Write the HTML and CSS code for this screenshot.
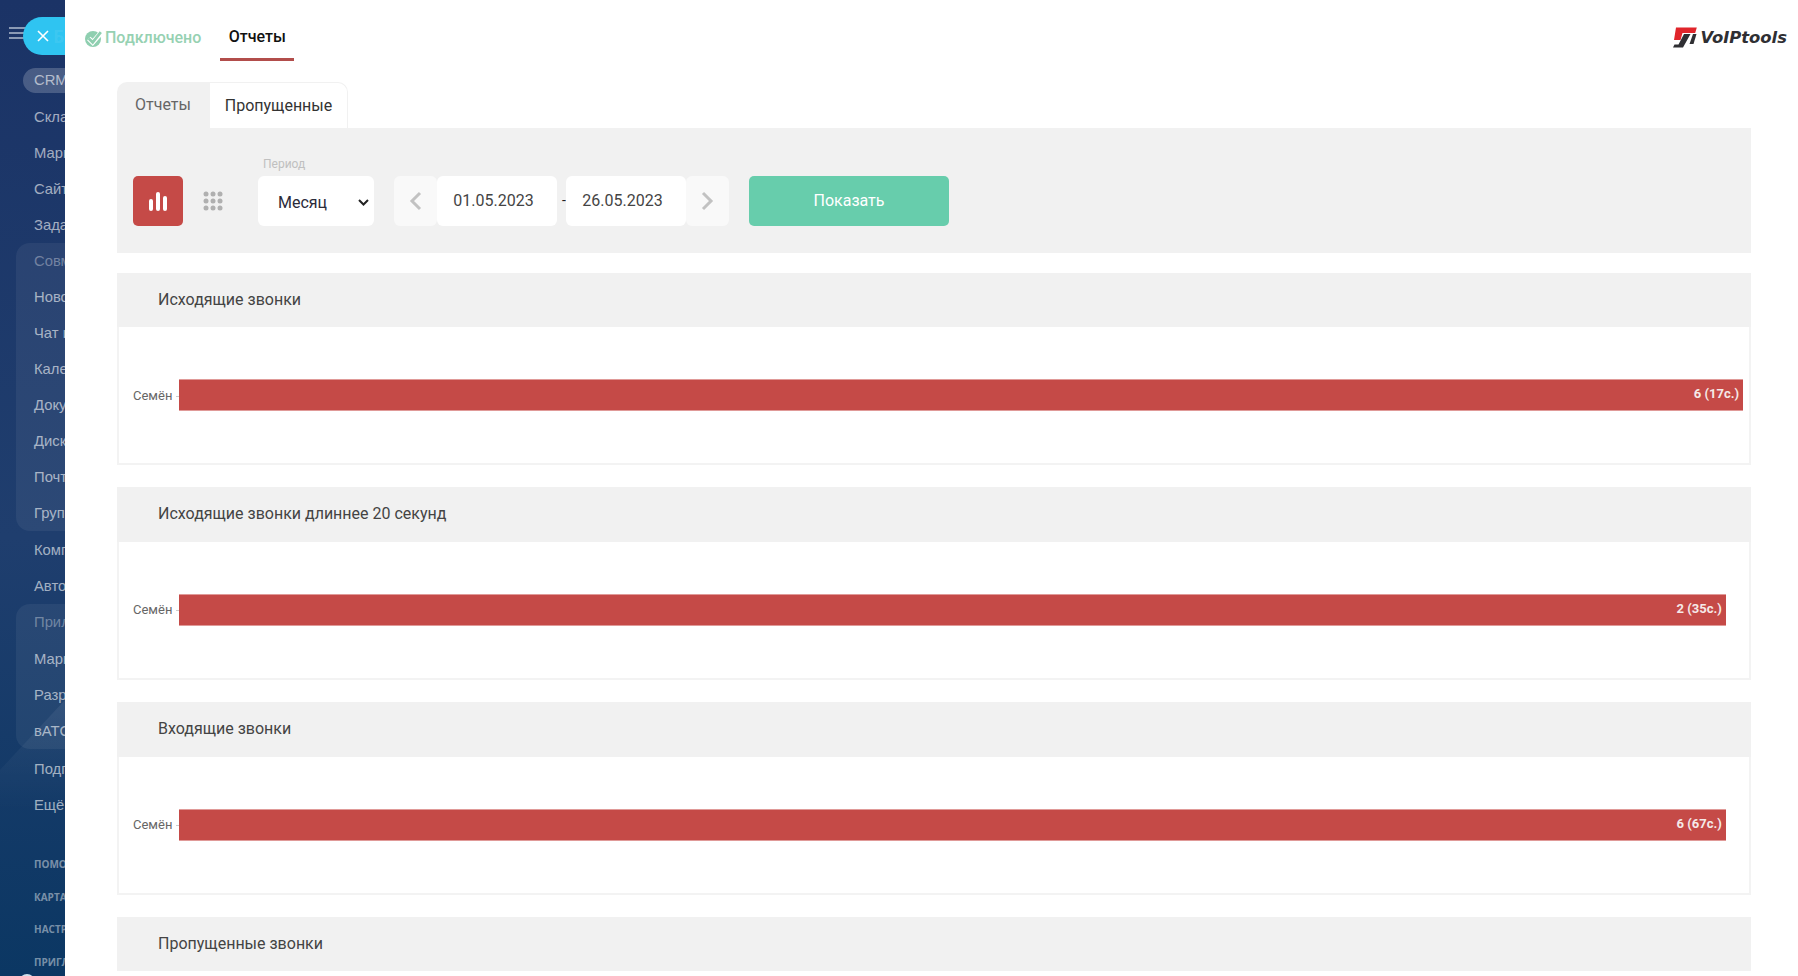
FILE: index.html
```html
<!DOCTYPE html>
<html lang="ru">
<head>
<meta charset="utf-8">
<title>Отчеты</title>
<link rel="stylesheet" href="styles.css">
</head>
<body>
<div class="app">
  <aside class="sidebar">
    <div class="burger"><i></i><i></i><i></i></div>
    <nav class="menu">
      <a class="item pill">CRM</a>
      <a class="item">Склад</a>
      <a class="item">Маркетинг</a>
      <a class="item">Сайты</a>
      <a class="item">Задачи</a>
      <div class="group group-a">
        <a class="item dim">Совместная</a>
        <a class="item">Новости</a>
        <a class="item">Чат и звонки</a>
        <a class="item">Календарь</a>
        <a class="item">Документы</a>
        <a class="item">Диск</a>
        <a class="item">Почта</a>
        <a class="item">Группы</a>
      </div>
      <a class="item">Компания</a>
      <a class="item">Автоматизация</a>
      <div class="group group-b">
        <a class="item dim">Приложения</a>
        <a class="item">Маркет</a>
        <a class="item">Разработчикам</a>
        <a class="item">вАТС</a>
      </div>
      <a class="item">Подписка</a>
      <a class="item">Ещё</a>
      <div class="small-links">
        <a>ПОМОЩЬ</a>
        <a>КАРТА САЙТА</a>
        <a>НАСТРОИТЬ МЕНЮ</a>
        <a>ПРИГЛАСИТЬ</a>
      </div>
    </nav>
    <span class="avatar"></span>
  </aside>

  <button class="close" aria-label="Закрыть">
    <svg class="close-icon" width="14" height="14" viewBox="0 0 14 14"><path d="M2 2l10 10M12 2L2 12" stroke="#fff" stroke-width="1.6" fill="none"/></svg>
    <span class="close-text">Бит</span>
  </button>

  <main class="main">
    <header class="topbar">
      <div class="status">
        <svg class="status-icon" width="18" height="18" viewBox="0 0 18 18">
          <circle cx="8" cy="10" r="8" fill="#8fcfb0"/>
          <path d="M3.800 9.500L7.700 13.300L15.800 4.200" stroke="#fff" stroke-width="5" fill="none"/>
          <path d="M3.800 9.500L7.700 13.300L15.800 3.200" stroke="#8fcfb0" stroke-width="2.800" fill="none"/>
        </svg>
        <span>Подключено</span>
      </div>
      <a class="top-tab">Отчеты</a>
      <div class="logo">
        <svg width="24" height="21" viewBox="0 0 24 21">
          <path d="M3 0.500H23.800L22.200 6H9.500L7.500 13H1z" fill="#e0252b"/>
          <path d="M11 7H17.500L10 20.500H0L1.500 17.500H5.500z" fill="#2f2f33"/>
          <path d="M20 7H23.500L20.500 17H16.500z" fill="#2f2f33"/>
        </svg>
        <span class="logo-text">VoIPtools</span>
      </div>
    </header>

    <section class="content">
      <div class="tabs">
        <a class="tab">Отчеты</a>
        <a class="tab active">Пропущенные</a>
      </div>

      <div class="filters">
        <button class="view-btn">
          <svg width="18" height="19" viewBox="0 0 18 19" fill="#fff"><rect x="0" y="7" width="4" height="12" rx="2"/><rect x="7" y="0" width="4" height="19" rx="2"/><rect x="14" y="4" width="4" height="15" rx="2"/></svg>
        </button>
        <span class="grid-btn">
          <svg width="20" height="20" viewBox="0 0 20 20" fill="#b0b0b0"><circle cx="3" cy="3" r="2.500"/><circle cx="10" cy="3" r="2.500"/><circle cx="17" cy="3" r="2.500"/><circle cx="3" cy="10" r="2.500"/><circle cx="10" cy="10" r="2.500"/><circle cx="17" cy="10" r="2.500"/><circle cx="3" cy="17" r="2.500"/><circle cx="10" cy="17" r="2.500"/><circle cx="17" cy="17" r="2.500"/></svg>
        </span>
        <label class="period">
          <span class="period-label">Период</span>
          <span class="select">Месяц
            <svg class="chev" width="11" height="7" viewBox="0 0 11 7"><path d="M1 1l4.500 4.500L10 1" stroke="#222" stroke-width="2" fill="none"/></svg>
          </span>
        </label>
        <div class="dates">
          <span class="arrow">
            <svg width="13" height="20" viewBox="0 0 13 20"><path d="M11 2L3 10l8 8" stroke="#c2c2c2" stroke-width="3" fill="none"/></svg>
          </span>
          <span class="date">01.05.2023</span>
          <span class="dash">-</span>
          <span class="date">26.05.2023</span>
          <span class="arrow">
            <svg width="13" height="20" viewBox="0 0 13 20"><path d="M2 2l8 8-8 8" stroke="#c2c2c2" stroke-width="3" fill="none"/></svg>
          </span>
        </div>
        <button class="show">Показать</button>
      </div>

      <article class="card">
        <h3 class="card-title">Исходящие звонки</h3>
        <div class="card-body">
          <span class="bar-label">Семён</span>
          <div class="track"><div class="bar" style="width:100%">6 (17с.)</div></div>
        </div>
      </article>
      <article class="card">
        <h3 class="card-title">Исходящие звонки длиннее 20 секунд</h3>
        <div class="card-body">
          <span class="bar-label">Семён</span>
          <div class="track"><div class="bar" style="width:98.900%">2 (35с.)</div></div>
        </div>
      </article>
      <article class="card">
        <h3 class="card-title">Входящие звонки</h3>
        <div class="card-body">
          <span class="bar-label">Семён</span>
          <div class="track"><div class="bar" style="width:98.900%">6 (67с.)</div></div>
        </div>
      </article>
      <article class="card">
        <h3 class="card-title">Пропущенные звонки</h3>
      </article>
    </section>
  </main>
</div>
</body>
</html>
```
FILE: styles.css
```css
* { box-sizing: border-box; }
html, body { margin: 0; height: 100%; overflow: hidden; background: #fff; }
body { font-family: Roboto, "Noto Sans", sans-serif; color: #333; }

.app { display: flex; height: 976px; position: relative; overflow: hidden; }

/* Sidebar */
.sidebar {
  width: 65px;
  flex: none;
  position: relative;
  overflow: hidden;
  white-space: nowrap;
  background: linear-gradient(180deg, #1b3366 0%, #1f3e6e 55%, #0b3763 100%);
}
.sidebar::before {
  content: "";
  position: absolute;
  left: 0;
  top: 700px;
  width: 65px;
  height: 276px;
  background: linear-gradient(180deg, rgba(255,255,255,.07), rgba(255,255,255,0) 40%);
  clip-path: polygon(0 70px, 65px 0, 65px 100%, 0 100%);
}
.burger { position: absolute; left: 9px; top: 27px; width: 17px; display: flex; flex-direction: column; gap: 3px; }
.burger i { height: 2px; background: #8b9ab5; display: block; }
.menu {
  position: relative;
  display: flex;
  flex-direction: column;
  padding: 62px 0 0 16px;
  font-family: "Liberation Sans", sans-serif;
  font-size: 14.8px;
}
.item { display: block; height: 36px; line-height: 36px; padding-left: 18px; color: rgba(255,255,255,.6); }
.pill {
  height: 25px;
  line-height: 25px;
  margin: 6px 0 5.500px 7px;
  padding-left: 11px;
  border-radius: 13px 0 0 13px;
  background: rgba(255,255,255,.2);
}
.group { background: rgba(255,255,255,.06); border-radius: 14px 0 0 14px; }
.group-a { margin: .5px 0 1px; }
.group-b { margin: 0 0 2px; }
.group-b .dim { height: 36.500px; }
.dim { color: rgba(255,255,255,.35); }
.small-links {
  display: flex;
  flex-direction: column;
  margin-top: 25.500px;
  padding-left: 18px;
  font-family: "Open Sans", sans-serif;
  font-size: 10px;
  font-weight: 700;
  color: rgba(255,255,255,.45);
}
.small-links a { height: 32.500px; line-height: 32.500px; }
.avatar { position: absolute; left: 19px; top: 974px; width: 16px; height: 16px; border-radius: 50%; background: #cfe0ec; }

.close {
  position: absolute;
  left: 23px;
  top: 17px;
  width: 42px;
  height: 38px;
  padding: 0 0 0 13px;
  border: 0;
  border-radius: 19px 0 0 19px;
  background: #2fc4f1;
  display: flex;
  align-items: center;
  overflow: hidden;
  white-space: nowrap;
  z-index: 2;
}
.close-icon { flex: none; }
.close-text { flex: none; margin-left: 3px; font-size: 18px; color: rgba(255,255,255,.07); font-family: "Open Sans", sans-serif; font-weight: 700; }

/* Main */
.main { flex: 1; min-width: 0; background: #fff; border-radius: 10px 0 0 0; }
.topbar { height: 82px; display: flex; align-items: flex-start; position: relative; padding-left: 20px; }
.status {
  display: flex;
  align-items: center;
  gap: 2px;
  margin-top: 27px;
  height: 20px;
  font-size: 16px;
  font-weight: 500;
  color: #96d1b2;
}
.status-icon { margin-top: 2px; flex: none; }
.top-tab {
  margin: 0 0 0 19px;
  height: 61px;
  padding: 27px 0 0;
  width: 74px;
  text-align: center;
  font-size: 16px;
  font-weight: 500;
  color: #111;
  line-height: 20px;
  border-bottom: 3px solid #b24d4b;
  white-space: nowrap;
}
.logo { margin-left: auto; margin-right: 11px; margin-top: 27px; display: flex; align-items: center; gap: 3px; }
.logo-text { font-family: "DejaVu Sans", sans-serif; font-size: 16.400px; font-weight: 700; font-style: italic; color: #2f2f33; }

.content { padding: 0 47px 0 52px; }
.tabs { display: flex; height: 46px; }
.tab {
  height: 46px;
  line-height: 46px;
  font-size: 16px;
  text-align: center;
  color: #666;
  background: #f1f1f1;
  width: 92px;
  border-radius: 10px 0 0 0;
}
.tab.active {
  width: 139px;
  color: #333;
  background: #fff;
  border: 1px solid #f1f1f1;
  border-bottom: 0;
  border-radius: 0 10px 0 0;
}

.filters {
  height: 124.600px;
  background: #f1f1f1;
  display: flex;
  align-items: flex-start;
  padding: 48px 0 0 16px;
}
.view-btn {
  width: 50px;
  height: 50px;
  border: 0;
  padding: 0;
  border-radius: 5px;
  background: #c54a47;
  display: flex;
  align-items: center;
  justify-content: center;
}
.grid-btn { width: 50px; height: 50px; margin-left: 5px; display: flex; align-items: center; justify-content: center; }
.period { position: relative; display: block; margin-left: 20px; }
.period-label { position: absolute; left: 5px; top: -19px; font-size: 12px; color: #c0c0c0; }
.select {
  width: 116px;
  height: 50px;
  background: #fff;
  border-radius: 6px;
  display: flex;
  align-items: center;
  padding: 2px 0 0 20px;
  font-size: 16px;
  color: #2b2b3a;
  position: relative;
}
.chev { position: absolute; right: 5px; top: 23px; }
.dates { display: flex; margin-left: 20px; }
.arrow {
  width: 43px;
  height: 50px;
  background: #f9f9f9;
  border-radius: 6px;
  display: flex;
  align-items: center;
  justify-content: center;
}
.date {
  width: 120px;
  height: 50px;
  background: #fff;
  border-radius: 6px;
  display: flex;
  align-items: center;
  justify-content: center;
  padding: 0 7px 2px 0;
  font-size: 16px;
  color: #444;
}
.dash { width: 9px; padding-left: 5px; line-height: 48px; font-size: 14px; color: #222; }
.show {
  margin-left: 20px;
  width: 200px;
  height: 50px;
  border: 0;
  padding: 0 0 2px;
  border-radius: 5px;
  background: #67cdac;
  color: #fff;
  font-family: Roboto, sans-serif;
  font-size: 16px;
}

.card { margin-top: 20px; }
.card + .card { margin-top: 22px; }
.card-title {
  margin: 0;
  height: 54.670px;
  line-height: 53px;
  padding-left: 41px;
  background: #f1f1f1;
  font-size: 16px;
  font-weight: 400;
  color: #444;
}
.card-body {
  height: 138px;
  border: 2px solid #f3f3f3;
  border-top: 0;
  display: flex;
  align-items: center;
  padding: 0 6px 0 14px;
}
.bar-label { width: 46px; flex: none; font-size: 13px; color: #666; position: relative; }
.bar-label::after { content: ""; position: absolute; right: 0; top: 8px; width: 3px; height: 1px; background: #ccc; }
.track { flex: 1; min-width: 0; }
.bar {
  height: 32px;
  background: #c54a47;
  border-top: 1px solid #e09a98;
  border-bottom: 1px solid #e09a98;
  color: #f5e9e8;
  font-size: 13px;
  font-weight: 700;
  line-height: 28px;
  text-align: right;
  padding-right: 4px;
}
```
